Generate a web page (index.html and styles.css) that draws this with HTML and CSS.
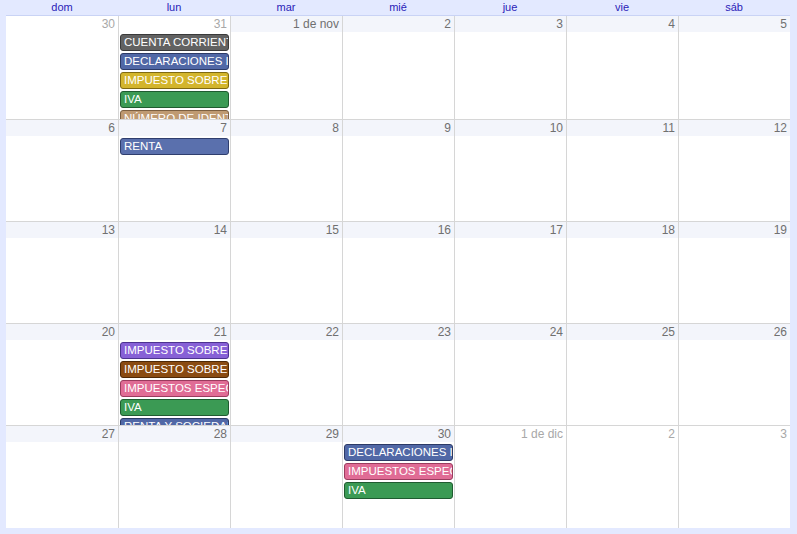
FILE: index.html
```html
<!DOCTYPE html>
<html lang="es">
<head>
<meta charset="utf-8">
<title>Calendario</title>
<link rel="stylesheet" href="styles.css">
</head>
<body>
<div class="cal">
  <div class="dow">
    <div>dom</div><div>lun</div><div>mar</div><div>mié</div><div>jue</div><div>vie</div><div>sáb</div>
  </div>
  <div class="grid">
    <!-- week 1 -->
    <div class="cell other first"><div class="date">30</div></div>
    <div class="cell other"><div class="date">31</div>
      <div class="ev c-gray">CUENTA CORRIENTE</div>
      <div class="ev c-blue">DECLARACIONES INFORMATIVAS</div>
      <div class="ev c-yellow">IMPUESTO SOBRE SOCIEDADES</div>
      <div class="ev c-green">IVA</div>
      <div class="ev c-tan">NÚMERO DE IDENTIFICACIÓN</div>
    </div>
    <div class="cell"><div class="date">1 de nov</div></div>
    <div class="cell"><div class="date">2</div></div>
    <div class="cell"><div class="date">3</div></div>
    <div class="cell"><div class="date">4</div></div>
    <div class="cell"><div class="date">5</div></div>
    <!-- week 2 -->
    <div class="cell first"><div class="date">6</div></div>
    <div class="cell"><div class="date">7</div>
      <div class="ev c-blue2">RENTA</div>
    </div>
    <div class="cell"><div class="date">8</div></div>
    <div class="cell"><div class="date">9</div></div>
    <div class="cell"><div class="date">10</div></div>
    <div class="cell"><div class="date">11</div></div>
    <div class="cell"><div class="date">12</div></div>
    <!-- week 3 -->
    <div class="cell first"><div class="date">13</div></div>
    <div class="cell"><div class="date">14</div></div>
    <div class="cell"><div class="date">15</div></div>
    <div class="cell"><div class="date">16</div></div>
    <div class="cell"><div class="date">17</div></div>
    <div class="cell"><div class="date">18</div></div>
    <div class="cell"><div class="date">19</div></div>
    <!-- week 4 -->
    <div class="cell first"><div class="date">20</div></div>
    <div class="cell"><div class="date">21</div>
      <div class="ev c-purple">IMPUESTO SOBRE LA RENTA</div>
      <div class="ev c-brown">IMPUESTO SOBRE EL VALOR</div>
      <div class="ev c-pink">IMPUESTOS ESPECIALES</div>
      <div class="ev c-green">IVA</div>
      <div class="ev c-blue">RENTA Y SOCIEDADES</div>
    </div>
    <div class="cell"><div class="date">22</div></div>
    <div class="cell"><div class="date">23</div></div>
    <div class="cell"><div class="date">24</div></div>
    <div class="cell"><div class="date">25</div></div>
    <div class="cell"><div class="date">26</div></div>
    <!-- week 5 -->
    <div class="cell first"><div class="date">27</div></div>
    <div class="cell"><div class="date">28</div></div>
    <div class="cell"><div class="date">29</div></div>
    <div class="cell"><div class="date">30</div>
      <div class="ev c-blue">DECLARACIONES INFORMATIVAS</div>
      <div class="ev c-pink">IMPUESTOS ESPECIALES</div>
      <div class="ev c-green">IVA</div>
    </div>
    <div class="cell other"><div class="date">1 de dic</div></div>
    <div class="cell other"><div class="date">2</div></div>
    <div class="cell other"><div class="date">3</div></div>
  </div>
</div>
</body>
</html>
```

FILE: styles.css
```css
html, body {
  margin: 0;
  padding: 0;
  background: #e3e9ff;
}

.cal {
  box-sizing: border-box;
  width: 797px;
  height: 534px;
  padding: 0 7px 6px 6px;
  display: flex;
  flex-direction: column;
  font-family: "Liberation Sans", Arial, sans-serif;
}

.dow {
  display: grid;
  grid-template-columns: repeat(7, 112px);
  height: 15px;
  font-size: 11px;
  line-height: 15px;
  color: #2a22b8;
  text-align: center;
}

.grid {
  flex: 1;
  display: grid;
  grid-template-columns: repeat(7, 112px);
  grid-template-rows: 104px 102px 102px 102px 102px;
  background: #ffffff;
  border-top: 1px solid #c9d3f5;
  min-height: 0;
}

.cell {
  box-sizing: border-box;
  border-left: 1px solid #d6d6d6;
  border-bottom: 1px solid #d6d6d6;
  overflow: hidden;
  min-height: 0;
}

.cell.first {
  border-left: none;
}

.grid .cell:nth-last-child(-n+7) {
  border-bottom: none;
}

.date {
  height: 16px;
  line-height: 16px;
  padding-right: 3px;
  text-align: right;
  font-size: 12px;
  color: #707070;
  background: #f3f5fb;
}

.other .date {
  background: #ffffff;
  color: #a8a8a8;
}

.ev {
  box-sizing: border-box;
  height: 17px;
  margin: 2px 1px 2px 1px;
  padding-left: 3px;
  border: 1px solid #333;
  border-radius: 3px;
  color: #ffffff;
  font-size: 11.5px;
  line-height: 15px;
  white-space: nowrap;
  overflow: hidden;
}

.c-gray   { background: #626262; border-color: #3a3a3a; }
.c-blue   { background: #5168a6; border-color: #2c3a66; }
.c-blue2  { background: #5a70ad; border-color: #2f3e6e; }
.c-yellow { background: #d3b52c; border-color: #7f6a10; }
.c-green  { background: #3b9a54; border-color: #1f5b30; }
.c-tan    { background: #bf9a72; border-color: #7c5f40; }
.c-purple { background: #8761d6; border-color: #4d3390; }
.c-brown  { background: #8a4b12; border-color: #4f2906; }
.c-pink   { background: #e06c95; border-color: #9a3b5e; }
```
